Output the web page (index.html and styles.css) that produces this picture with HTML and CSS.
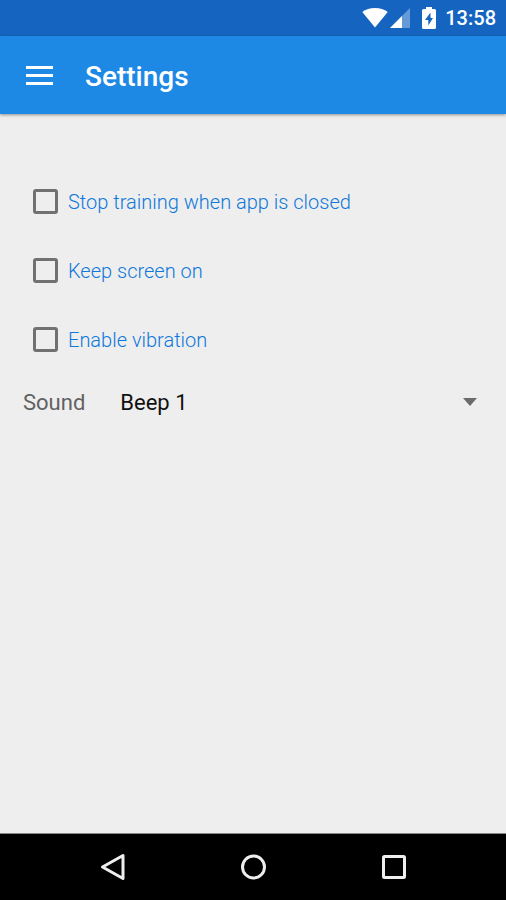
FILE: index.html
```html
<!DOCTYPE html>
<html lang="en">
<head>
	<meta charset="utf-8">
	<meta name="viewport" content="width=device-width">
	<title>Settings</title>
	<link rel="stylesheet" href="styles.css">
</head>
<body>
	<div class="statusbar">
		<svg class="wifi" width="26" height="20" viewBox="0 0 26 20" aria-hidden="true">
			<path d="M13 19.500 L0.300 4 Q5.500 0 13 0 T25.700 4 Z" fill="#fff"/>
		</svg>
		<svg class="signal" width="20" height="20" viewBox="0 0 20 20" aria-hidden="true">
			<path d="M0 20 L20 0 V20 Z" fill="#fff" opacity="0.35"/>
			<path d="M0 20 L12 8 V20 Z" fill="#fff"/>
		</svg>
		<svg class="battery" width="14" height="22" viewBox="0 0 14 22" aria-hidden="true">
			<path d="M4 0 H10 V2 H12.500 Q14 2 14 3.500 V20.500 Q14 22 12.500 22 H1.500 Q0 22 0 20.500 V3.500 Q0 2 1.500 2 H4 Z" fill="#fff"/>
			<path d="M8.500 5.500 L3 13 H6.300 V18.500 L11 11 H8.500 Z" fill="#1565c0"/>
		</svg>
		<span class="clock">13:58</span>
	</div>

	<header class="appbar">
		<button class="menu" type="button" aria-label="Menu">
			<svg width="27" height="19" viewBox="0 0 27 19">
				<path d="M0 0 H27 V3 H0 Z M0 8 H27 V11 H0 Z M0 16 H27 V19 H0 Z" fill="#fff"/>
			</svg>
		</button>
		<h1>Settings</h1>
	</header>

	<main>
		<form class="settings">
			<label class="option"><input type="checkbox" name="stop"> Stop training when app is closed</label>
			<label class="option"><input type="checkbox" name="screen"> Keep screen on</label>
			<label class="option"><input type="checkbox" name="vibration"> Enable vibration</label>
			<div class="sound">
				<label for="sound">Sound</label>
				<div class="spinner">
					<select id="sound" name="sound">
						<option>Beep 1</option>
					</select>
					<svg width="14" height="8" viewBox="0 0 14 8" aria-hidden="true">
						<path d="M0 0 H14 L7 8 Z" fill="#6b6b6b"/>
					</svg>
				</div>
			</div>
		</form>
	</main>

	<nav class="navbar">
		<button type="button" aria-label="Back">
			<svg width="28" height="28" viewBox="0 0 28 28">
				<path d="M25 2.500 V25.500 L4.500 14 Z"/>
			</svg>
		</button>
		<button type="button" aria-label="Home">
			<svg width="28" height="28" viewBox="0 0 28 28">
				<circle cx="14.500" cy="14" r="11"/>
			</svg>
		</button>
		<button type="button" aria-label="Recent apps">
			<svg width="28" height="28" viewBox="0 0 28 28">
				<rect x="3.500" y="3.500" width="21" height="21" rx="1"/>
			</svg>
		</button>
	</nav>
</body>
</html>
```

FILE: styles.css
```css
body{
	font-family: Roboto, "Liberation Sans", sans-serif;
	margin: 0;
	min-height: 100vh;
	display: flex;
	flex-direction: column;
	background: #eeeeee;
}

button{
	padding: 0;
	border: 0;
	background: none;
}

svg{
	display: block;
}

/* Status bar */
.statusbar{
	height: 36px;
	display: flex;
	align-items: center;
	justify-content: flex-end;
	padding-right: 10px;
	background: #1565c0;
	color: #ffffff;
}

.signal{
	margin-left: 2px;
}

.battery{
	margin: 0 9px 0 12px;
}

.clock{
	font-size: 20px;
	font-weight: 500;
	line-height: 38px;
}

/* App bar */
.appbar{
	height: 78px;
	display: flex;
	align-items: center;
	gap: 32px;
	padding: 0 26px;
	background: #1e88e5;
	color: #ffffff;
	box-shadow: 0 1px 3px rgba(0, 0, 0, 0.4);
}

.appbar h1{
	margin: 0;
	padding-top: 2px;
	font-size: 28px;
	font-weight: 500;
}

/* Settings */
main{
	flex: 1;
}

.settings{
	padding: 53px 23px 0 23px;
}

.option{
	height: 69px;
	display: flex;
	align-items: center;
	gap: 10px;
	padding-left: 10px;
	font-size: 20px;
	font-weight: 300;
	color: #0f78da;
}

.option input{
	appearance: none;
	width: 25px;
	height: 25px;
	margin: 0;
	border: 3px solid #717171;
	border-radius: 3px;
}

.sound{
	height: 56px;
	display: flex;
	align-items: center;
	font-size: 22px;
	color: #616161;
}

.spinner{
	flex: 1;
	display: flex;
	align-items: center;
	margin-left: 35px;
	padding-right: 6px;
}

.spinner select{
	appearance: none;
	flex: 1;
	padding: 0;
	border: 0;
	background: none;
	font: inherit;
	color: #111111;
}

/* Navigation bar */
.navbar{
	height: 66px;
	display: flex;
	align-items: center;
	justify-content: center;
	gap: 113px;
	border-top: 1px solid #8a8a8a;
	background: #000000;
}

.navbar svg{
	fill: none;
	stroke: #eeeeee;
	stroke-width: 3;
	stroke-linejoin: round;
}
```
